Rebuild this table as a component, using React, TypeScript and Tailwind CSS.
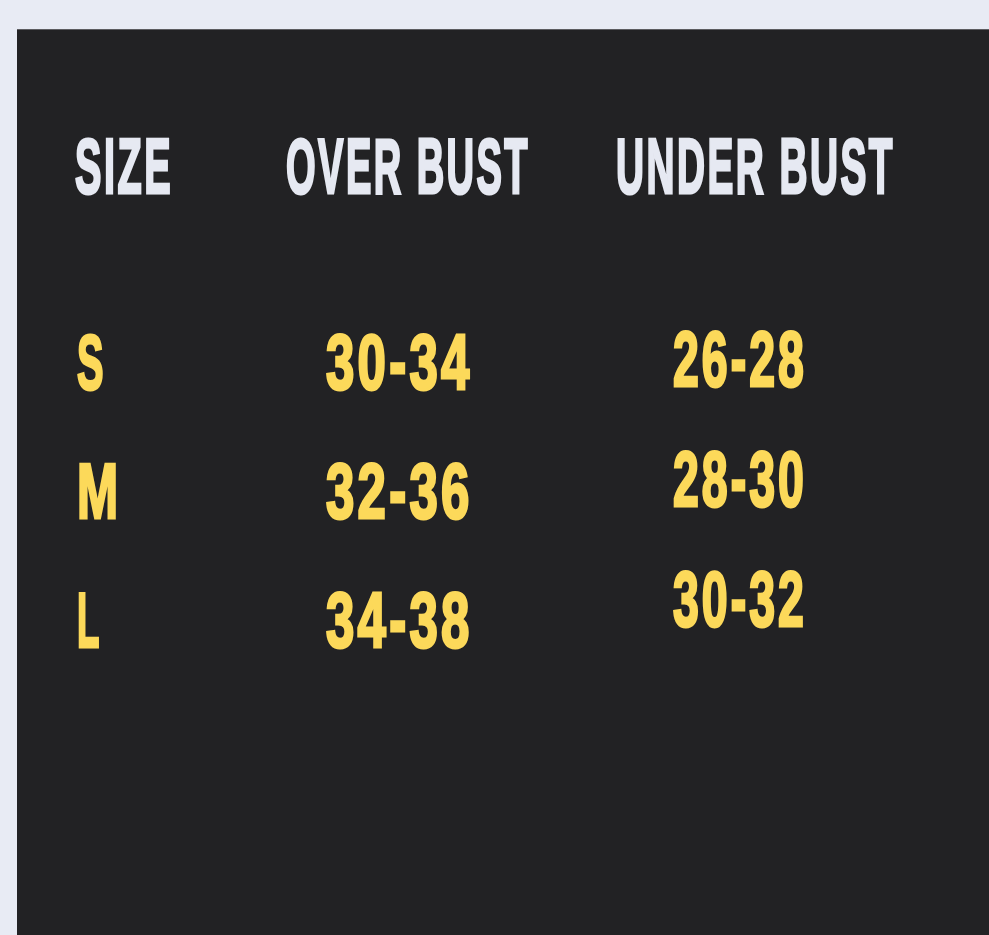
const font = { fontFamily: '"Liberation Sans", Arial, sans-serif' }

const cols = [
  {
    title: 'SIZE',
    titleScale: 'scale-x-[0.508]',
    width: 'w-[211px]',
    indent: 'pl-[2px]',
    list: 'mt-[118px] gap-[51px]',
    rows: [
      { v: 'S', s: 'scale-x-[0.51]' },
      { v: 'M', s: 'scale-x-[0.633]' },
      { v: 'L', s: 'scale-x-[0.47]' },
    ],
  },
  {
    title: 'OVER BUST',
    titleScale: 'scale-x-[0.488]',
    width: 'w-[330px]',
    indent: 'pl-[40px]',
    list: 'mt-[118px] gap-[51px]',
    rows: [
      { v: '30-34', s: 'scale-x-[0.653]' },
      { v: '32-36', s: 'scale-x-[0.653]' },
      { v: '34-38', s: 'scale-x-[0.653]' },
    ],
  },
  {
    title: 'UNDER BUST',
    titleScale: 'scale-x-[0.497]',
    width: 'w-[300px]',
    indent: 'pl-[57px]',
    list: 'mt-[115px] gap-[42px]',
    rows: [
      { v: '26-28', s: 'scale-x-[0.596]' },
      { v: '28-30', s: 'scale-x-[0.596]' },
      { v: '30-32', s: 'scale-x-[0.596]' },
    ],
  },
]

export default function App() {
  return (
    <div className="min-h-[935px] bg-[#e8ebf4] pt-[29px] pl-[17px] overflow-hidden" style={font}>
      <div className="h-[906px] bg-[#222224] border-t border-[#5c5c60] pl-[58px] pt-[97px] flex">
        {cols.map(c => (
          <div key={c.title} className={`${c.width} shrink-0 flex flex-col`}>
            <div className="h-[78px] text-[78px] leading-none font-bold tracking-[5px] text-[#e6e9f2] whitespace-nowrap [-webkit-text-stroke-width:3px]">
              <span className={`inline-block origin-left ${c.titleScale}`}>{c.title}</span>
            </div>
            <div className={`flex flex-col ${c.list} ${c.indent}`}>
              {c.rows.map(r => (
                <div key={r.v} className="h-[78px] text-[78px] leading-none font-bold tracking-[5px] text-[#fcd95a] whitespace-nowrap [-webkit-text-stroke-width:3px]">
                  <span className={`inline-block origin-left ${r.s}`}>{r.v}</span>
                </div>
              ))}
            </div>
          </div>
        ))}
      </div>
    </div>
  )
}
